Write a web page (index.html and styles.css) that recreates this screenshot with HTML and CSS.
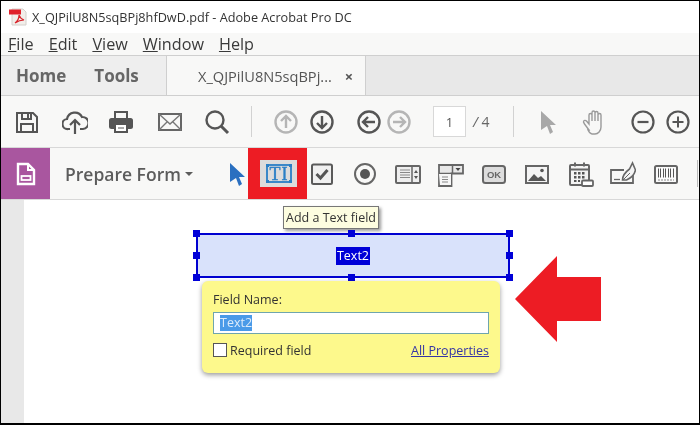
FILE: index.html
```html
<!DOCTYPE html>
<html lang="en">
<head>
<meta charset="utf-8">
<title>Adobe Acrobat Pro DC</title>
<link rel="stylesheet" href="styles.css">
</head>
<body>
<div class="window">
  <header class="titlebar">
    <svg class="pdf-icon" viewBox="0 0 20 18"><path d="M3 1h11l3 3v13H3z" fill="#f2eeea" stroke="#d4d0cc"/><rect x="0" y="1.500" width="12" height="5" fill="#e0202a"/><path d="M6 15c3-2 4-5 4-8 1 3 2 4 5 5-3 0-6 1-9 3z" fill="none" stroke="#d8232a" stroke-width="1.200"/></svg>
    <span>X_QJPilU8N5sqBPj8hfDwD.pdf - Adobe Acrobat Pro DC</span>
  </header>
  <nav class="menubar">
    <span><u>F</u>ile</span><span><u>E</u>dit</span><span><u>V</u>iew</span><span><u>W</u>indow</span><span><u>H</u>elp</span>
  </nav>
  <div class="tabbar">
    <div class="tabs-home"><span>Home</span><span>Tools</span></div>
    <div class="tab-doc"><span>X_QJPilU8N5sqBPj...</span><span class="tab-close">×</span></div>
    <div class="tab-rest"></div>
  </div>
  <div class="toolbar">
    <svg class="ico i-save" viewBox="0 0 26 26"><path d="M3 4h16l4 4v15H3z M8 4v6h9V4 M7 23v-8h12v8" fill="none" stroke="#555" stroke-width="2"/><rect x="13" y="5" width="2" height="4" fill="#555"/></svg>
    <svg class="ico i-cloud" viewBox="0 0 26 26"><path d="M8 20H6a5 5 0 0 1-1-10 8 8 0 0 1 15-2 6 6 0 0 1 1 12h-3 M13 25V12 M8 16l5-5 5 5" fill="none" stroke="#555" stroke-width="2.200"/></svg>
    <svg class="ico i-print" viewBox="0 0 26 26"><path d="M7 10V3h12v7" fill="none" stroke="#555" stroke-width="2"/><rect x="1" y="9" width="24" height="11" rx="2.500" fill="#555"/><rect x="7" y="15" width="12" height="8" fill="#fff" stroke="#555" stroke-width="2"/><path d="M10 19h6" stroke="#555"/></svg>
    <svg class="ico i-mail" viewBox="0 0 26 26"><rect x="2" y="5" width="22" height="16" fill="none" stroke="#666" stroke-width="2"/><path d="M2 5l11 10L24 5 M2 21l8-8 M24 21l-8-8" fill="none" stroke="#777" stroke-width="1.400"/></svg>
    <svg class="ico i-search" viewBox="0 0 26 26"><circle cx="11" cy="11" r="8.500" fill="none" stroke="#555" stroke-width="2.400"/><path d="M17 17l7 7" stroke="#555" stroke-width="3"/></svg>
    <div class="sep s-a"></div>
    <svg class="ico i-up" viewBox="0 0 26 26"><circle cx="13" cy="13" r="10.500" fill="none" stroke="#b5b5b5" stroke-width="2.400"/><path d="M13 19V8 M8 12l5-5 5 5" fill="none" stroke="#b5b5b5" stroke-width="2.400"/></svg>
    <svg class="ico i-down" viewBox="0 0 26 26"><circle cx="13" cy="13" r="10.500" fill="none" stroke="#555" stroke-width="2.400"/><path d="M13 7v11 M8 14l5 5 5-5" fill="none" stroke="#555" stroke-width="2.400"/></svg>
    <svg class="ico i-back" viewBox="0 0 26 26"><circle cx="13" cy="13" r="10.500" fill="none" stroke="#555" stroke-width="2.400"/><path d="M19 13H8 M12 8l-5 5 5 5" fill="none" stroke="#555" stroke-width="2.400"/></svg>
    <svg class="ico i-fwd" viewBox="0 0 26 26"><circle cx="13" cy="13" r="10.500" fill="none" stroke="#b5b5b5" stroke-width="2.400"/><path d="M7 13h11 M14 8l5 5-5 5" fill="none" stroke="#b5b5b5" stroke-width="2.400"/></svg>
    <div class="page-box">1</div>
    <div class="page-total"><i>/</i> 4</div>
    <div class="sep s-b"></div>
    <svg class="ico i-arrow" viewBox="0 0 26 26"><path d="M6 2l15 14h-6l3 7-3 2-3-8-6 4z" fill="#a8a8a8"/></svg>
    <svg class="ico i-hand" viewBox="0 0 26 26"><path d="M7 21C5 18 2 15 1.500 13c0-2 2-2 3-1l2.500 3V6a1.400 1.400 0 0 1 3 0v6-8.500a1.400 1.400 0 0 1 3 0V12 4a1.400 1.400 0 0 1 3 0v8-6a1.400 1.400 0 0 1 3 0v12c0 4-3 7-6 7h-3c-2 0-3-2-4-4z" fill="none" stroke="#9a9a9a" stroke-width="1.400"/></svg>
    <svg class="ico i-minus" viewBox="0 0 26 26"><circle cx="13" cy="13" r="10.500" fill="none" stroke="#555" stroke-width="2.200"/><path d="M7.500 13h11" stroke="#555" stroke-width="2.200"/></svg>
    <svg class="ico i-plus" viewBox="0 0 26 26"><circle cx="13" cy="13" r="10.500" fill="none" stroke="#555" stroke-width="2.200"/><path d="M7.500 13h11 M13 7.500v11" stroke="#555" stroke-width="2"/></svg>
  </div>
  <div class="formbar">
    <div class="form-badge"><svg viewBox="0 0 22 24" class="badge-icon"><path d="M3 2h10l6 6v14H3z" fill="none" stroke="#fff" stroke-width="2.400"/><path d="M13 2v6h6" fill="none" stroke="#fff" stroke-width="2"/><rect x="6.500" y="14" width="9" height="4" fill="none" stroke="#fff" stroke-width="1.800"/></svg></div>
    <div class="form-title">Prepare Form<span class="caret"></span></div>
    <svg class="ico f-cursor" viewBox="0 0 26 26"><path d="M6 2l15 14h-6l3 7-3 2-3-8-6 4z" fill="#2a6fc0"/></svg>
    <div class="highlight"><div class="hl-inner"><svg class="ico" viewBox="0 0 26 26"><rect x="1" y="4" width="24" height="17" fill="none" stroke="#2a7fc6" stroke-width="1.800"/><rect x="0" y="3" width="3" height="3" fill="#2a7fc6"/><rect x="23" y="3" width="3" height="3" fill="#2a7fc6"/><rect x="0" y="19" width="3" height="3" fill="#2a7fc6"/><rect x="23" y="19" width="3" height="3" fill="#2a7fc6"/><text x="13" y="18.500" class="ti">TI</text></svg></div></div>
    <svg class="ico f-check" viewBox="0 0 26 26"><rect x="3" y="3.500" width="20" height="19.500" rx="1.500" fill="#f0f0f0" stroke="#5a5a5a" stroke-width="2"/><path d="M7.500 13l4 4 7-8" fill="none" stroke="#555" stroke-width="3"/></svg>
    <svg class="ico f-radio" viewBox="0 0 26 26"><circle cx="13" cy="13" r="10" fill="none" stroke="#666" stroke-width="2"/><circle cx="13" cy="13" r="5" fill="#555"/></svg>
    <svg class="ico f-list" viewBox="0 0 26 26"><rect x="1" y="5" width="24" height="17" rx="1" fill="#eee" stroke="#666" stroke-width="2"/><path d="M5 9h10 M5 11.500h10 M5 14h10 M5 16.500h10" stroke="#888"/><path d="M17 5v17" stroke="#666" stroke-width="1.500"/><path d="M19 12l2-3 2 3z M19 15l2 3 2-3z" fill="#555"/></svg>
    <svg class="ico f-drop" viewBox="0 0 26 26"><path d="M1 4h24v8.500H13.500V25H1z" fill="#e8e8e8" stroke="#666" stroke-width="1.800"/><path d="M1 12.500h12.500 M14.500 4v8.500" stroke="#666" stroke-width="1.500"/><path d="M1 13h12v11H2z" fill="#f6f6f6"/><path d="M17.500 7h5l-2.500 3z" fill="#444"/><path d="M4 16h6 M4 18.500h6 M4 21h6" stroke="#888"/></svg>
    <svg class="ico f-ok" viewBox="0 0 26 26"><rect x="2" y="5" width="22" height="17" rx="2.500" fill="#ddd" stroke="#666" stroke-width="2"/><text x="13" y="17" class="ok">OK</text></svg>
    <svg class="ico f-img" viewBox="0 0 26 26"><rect x="2" y="5" width="22" height="17" fill="#f4f4f4" stroke="#666" stroke-width="2"/><path d="M4 20l6-7 4 4 3-2 5 5z" fill="#555"/><circle cx="18" cy="9.500" r="1.800" fill="#555"/></svg>
    <svg class="ico f-cal" viewBox="0 0 26 26"><rect x="2" y="4" width="19" height="20" rx="1" fill="#f4f4f4" stroke="#666" stroke-width="2"/><path d="M2 8.500h19" stroke="#666" stroke-width="2"/><path d="M7 1.500v4 M16 1.500v4" stroke="#666" stroke-width="2"/><path d="M6 11h2.500v2.500H6z M10 11h2.500v2.500H10z M14 11h2.500v2.500H14z M6 15h2.500v2.500H6z M10 15h2.500v2.500H10z M14 15h2.500v2.500H14z M6 19h2.500v2H6z M10 19h2v2h-2z" fill="#555"/><rect x="14" y="19.500" width="11" height="5.500" rx="1" fill="#fff" stroke="#666" stroke-width="1.800"/></svg>
    <svg class="ico f-sign" viewBox="0 0 26 26"><path d="M14 9H1v13h22v-8" fill="none" stroke="#666" stroke-width="1.800"/><path d="M4 18.500h6" stroke="#666" stroke-width="1.300"/><path d="M12.500 19c0-5 3-8 7-11l3-6 3 7c-1 5-4 8-9 10z" fill="#f4f4f4" stroke="#666" stroke-width="1.600"/><path d="M13 19l7-7" stroke="#666"/></svg>
    <svg class="ico f-bar" viewBox="0 0 26 26"><rect x="2" y="5" width="22" height="17" rx="1.500" fill="#fafafa" stroke="#666" stroke-width="2"/><path d="M5.500 7.500v9 M7.500 7.500v9 M10.500 7.500v9 M12.500 7.500v9 M15.500 7.500v9 M17.500 7.500v9 M20.500 7.500v9" stroke="#555" stroke-width="1"/><path d="M5 19h16" stroke="#888" stroke-dasharray="2 1"/></svg>
    <div class="sep s-c"></div>
  </div>
  <main class="doc">
    <div class="doc-strip"></div>
    <div class="tooltip">Add a Text field</div>
    <div class="field">
      <span class="field-text">Text2</span>
      <i class="hd h-tl"></i><i class="hd h-tc"></i><i class="hd h-tr"></i>
      <i class="hd h-ml"></i><i class="hd h-mr"></i>
      <i class="hd h-bl"></i><i class="hd h-bc"></i><i class="hd h-br"></i>
    </div>
    <div class="popup">
      <div class="pop-label">Field Name:</div>
      <div class="pop-input"><span class="pop-sel">Text2</span></div>
      <div class="pop-row">
        <label class="pop-req"><span class="pop-box"></span>Required field</label>
        <a class="pop-link">All Properties</a>
      </div>
    </div>
    <svg class="big-arrow" viewBox="0 0 86 86"><path d="M0 43L42 0v21h44v44H42v21z" fill="#ed1c24"/></svg>
  </main>
</div>
</body>
</html>
```
FILE: styles.css
```css
* { box-sizing: border-box; }
html, body { margin: 0; padding: 0; background: #000; }
body { width: 700px; height: 425px; overflow: hidden; font-family: "Open Sans", "Noto Sans", sans-serif; }
.window {
  width: 700px; height: 425px;
  border: 1px solid #000; border-bottom-width: 2px;
  background: #fff; display: flex; flex-direction: column; overflow: hidden;
}
.titlebar, .menubar, .tabbar, .toolbar, .formbar, .doc { filter: blur(0.3px); }
.titlebar { height: 32px; flex: none; display: flex; align-items: center; padding-left: 8px; gap: 3px; font-size: 12.700px; color: #333; background: #fff; }
.pdf-icon { width: 20px; height: 18px; }
.menubar { height: 22px; flex: none; background: #f8f8f7; display: flex; gap: 15px; padding-left: 7px; font-size: 16.200px; line-height: 22px; color: #3a3a3a; }
.tabbar { height: 41px; flex: none; display: flex; border-top: 1px solid #cfcfcf; border-bottom: 1px solid #cfcfcf; background: #f8f8f7; }
.tabs-home { width: 166px; background: #eee; border-right: 1px solid #cfcfcf; display: flex; align-items: center; gap: 28px; padding-left: 15px; font-size: 17px; font-weight: 700; color: #666; }
.tab-doc { width: 198px; display: flex; align-items: center; padding-left: 31px; font-size: 14.600px; color: #555; white-space: nowrap; }
.tab-close { margin-left: 13px; font-weight: 700; }
.tab-rest { flex: 1; background: #e8e8e8; border-left: 1px solid #cfcfcf; }
.toolbar { height: 51px; flex: none; display: flex; align-items: center; background: #f8f8f7; }
.ico { width: 26px; height: 26px; flex: none; display: block; }
.sep { width: 1px; height: 31px; background: #d2d2d2; flex: none; }
.i-save { margin-left: 13px; }
.i-cloud { margin-left: 22px; }
.i-print { margin-left: 20px; }
.i-mail { margin-left: 23px; }
.i-search { margin-left: 21px; }
.s-a { margin-left: 21px; }
.i-up { margin-left: 21px; }
.i-down { margin-left: 10px; }
.i-back { margin-left: 21px; }
.i-fwd { margin-left: 4px; }
.page-box { margin-left: 21px; width: 33px; height: 31px; background: #fff; border: 1px solid #d8d8d8; display: flex; align-items: center; justify-content: center; font-size: 13px; color: #555; }
.page-total { margin-left: 7px; width: 20px; font-size: 14px; color: #666; white-space: nowrap; }
.s-b { margin-left: 20px; }
.i-arrow { margin-left: 21px; }
.i-hand { margin-left: 21px; }
.i-minus { margin-left: 22px; }
.i-plus { margin-left: 9px; }
.formbar { height: 53px; flex: none; display: flex; align-items: center; background: #f8f8f7; border-top: 1px solid #d8d8d8; border-bottom: 1px solid #d8d8d8; }
.form-badge { width: 49px; height: 100%; background: #a9569f; display: flex; align-items: center; justify-content: center; flex: none; }
.badge-icon { width: 22px; height: 24px; }
.form-title { margin-left: 15px; width: 130px; flex: none; font-size: 17.500px; font-weight: 600; color: #5c5c5c; display: flex; align-items: center; white-space: nowrap; }
.caret { margin-left: 4px; border-left: 4px solid transparent; border-right: 4px solid transparent; border-top: 4px solid #5c5c5c; }
.f-cursor { margin-left: 29px; margin-right: -2px; }
.highlight { width: 59px; height: 100%; background: #ed1c24; flex: none; padding: 12px 10px 12px 12px; }
.hl-inner { height: 100%; background: #dcdcdc; display: flex; align-items: center; justify-content: center; }
.ti { font: 400 18px "Liberation Serif", serif; fill: #2a7fc6; stroke: #2a7fc6; stroke-width: .4px; text-anchor: middle; letter-spacing: 1px; }
.ok { font: 700 9.500px "Liberation Sans", sans-serif; fill: #666; text-anchor: middle; }
.f-check { margin-left: 2px; }
.f-radio, .f-list, .f-drop, .f-ok, .f-img, .f-bar { margin-left: 17px; }
.f-cal { margin-left: 18px; }
.f-sign { margin-left: 16px; }
.s-c { margin-left: 18px; height: 27px; background: #bbb; }
.doc { flex: 1; position: relative; background: #fff; display: flex; }
.doc-strip { width: 23px; background: #e8e8e8; }
.tooltip { position: absolute; left: 282px; top: 6px; width: 96px; height: 23px; background: #fdfde0; border: 1px solid #777; box-shadow: 2px 2px 3px rgba(0,0,0,.4); font-size: 12.500px; line-height: 21px; text-align: center; color: #333; white-space: nowrap; }
.field { position: absolute; left: 195px; top: 33px; width: 314px; height: 45px; background: #d9e2fb; border: 2px solid #0000d0; display: flex; align-items: center; justify-content: center; }
.field-text { background: #0000d8; color: #fff; font-size: 12.500px; line-height: 18px; padding: 0 1px; }
.hd { position: absolute; width: 7px; height: 7px; background: #0000d8; }
.h-tl { left: -5px; top: -5px; } .h-tc { left: 150px; top: -5px; } .h-tr { right: -5px; top: -5px; }
.h-ml { left: -5px; top: 17px; } .h-mr { right: -5px; top: 17px; }
.h-bl { left: -5px; bottom: -5px; } .h-bc { left: 150px; bottom: -5px; } .h-br { right: -5px; bottom: -5px; }
.popup { position: absolute; left: 201px; top: 81px; width: 298px; height: 92px; background: #fdf98c; border-radius: 6px; box-shadow: 0 2px 5px rgba(0,0,0,.4); padding: 10px 11px 0 11px; color: #333; font-size: 12.500px; }
.pop-label { line-height: 18px; }
.pop-input { margin-top: 3px; height: 22px; background: #fff; border: 1px solid #6fa5ad; padding: 2px 0 0 6px; line-height: 16px; }
.pop-sel { display: inline-block; background: #4a9ae8; color: #dcebfb; height: 16px; }
.pop-row { margin-top: 8px; display: flex; justify-content: space-between; align-items: center; height: 16px; }
.pop-req { display: flex; align-items: center; gap: 3px; }
.pop-box { width: 14px; height: 14px; background: #fff; border: 1px solid #555; }
.pop-link { color: #3535a5; text-decoration: underline; }
.big-arrow { position: absolute; left: 514px; top: 56px; width: 86px; height: 86px; }
```
